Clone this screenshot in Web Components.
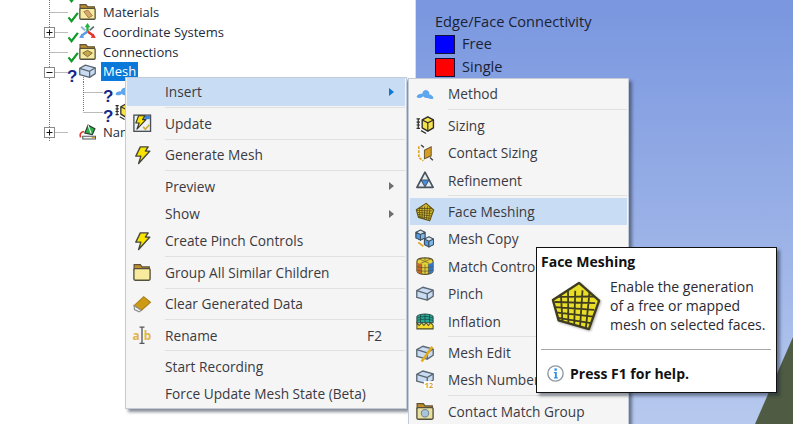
<!DOCTYPE html>
<html>
<head>
<meta charset="utf-8">
<title>Mesh menu</title>
<style>
    html, body { margin: 0; height: 100%; overflow: hidden; background: #fff; }
    body { font-family: "Open Sans", "Noto Sans", sans-serif; font-size: 13px; color: #333; }
</style>
</head>
<body>
<mech-stage>
    <tree-panel slot="tree">
        <tree-row status="check" icon="folderCon" style="margin-top:-20px"></tree-row>
        <tree-row status="check" icon="folderMat">Materials</tree-row>
        <tree-row status="check" icon="coords" expander="plus">Coordinate Systems</tree-row>
        <tree-row status="check" icon="folderCon">Connections</tree-row>
        <tree-row status="ask" icon="meshBox" expander="minus" selected>Mesh</tree-row>
        <tree-row status="ask" icon="method" depth="1"></tree-row>
        <tree-row status="ask" icon="sizing" depth="1" last></tree-row>
        <tree-row status="none" icon="named" expander="plus" clip="22">Named Selections</tree-row>
    </tree-panel>
    <view-port slot="view">
        <legend-key color="#0000ff" title-text="Edge/Face Connectivity">Free</legend-key>
        <legend-key color="#ff0000">Single</legend-key>
    </view-port>

    <pop-menu slot="menus" style="left:125px;top:77px;width:282px;height:332px;--pad:.3px">
        <menu-item arrow active>Insert</menu-item>
        <menu-sep></menu-sep>
        <menu-item icon="update">Update</menu-item>
        <menu-sep></menu-sep>
        <menu-item icon="bolt">Generate Mesh</menu-item>
        <menu-sep></menu-sep>
        <menu-item arrow>Preview</menu-item>
        <menu-item arrow>Show</menu-item>
        <menu-item icon="bolt">Create Pinch Controls</menu-item>
        <menu-sep></menu-sep>
        <menu-item icon="folder">Group All Similar Children</menu-item>
        <menu-sep></menu-sep>
        <menu-item icon="eraser">Clear Generated Data</menu-item>
        <menu-sep></menu-sep>
        <menu-item icon="rename" shortcut="F2">Rename</menu-item>
        <menu-sep></menu-sep>
        <menu-item>Start Recording</menu-item>
        <menu-item>Force Update Mesh State (Beta)</menu-item>
    </pop-menu>

    <pop-menu slot="menus" style="left:408px;top:78px;width:221px;height:360px;--pad:1.3px">
        <menu-item icon="method">Method</menu-item>
        <menu-sep></menu-sep>
        <menu-item icon="sizing">Sizing</menu-item>
        <menu-item icon="contact">Contact Sizing</menu-item>
        <menu-item icon="refine">Refinement</menu-item>
        <menu-sep></menu-sep>
        <menu-item icon="face" active>Face Meshing</menu-item>
        <menu-item icon="meshCopy">Mesh Copy</menu-item>
        <menu-item icon="match">Match Control</menu-item>
        <menu-item icon="meshBox">Pinch</menu-item>
        <menu-item icon="inflate">Inflation</menu-item>
        <menu-sep></menu-sep>
        <menu-item icon="meshEdit">Mesh Edit</menu-item>
        <menu-item icon="meshNum">Mesh Numbering</menu-item>
        <menu-sep></menu-sep>
        <menu-item icon="folderGrp">Contact Match Group</menu-item>
    </pop-menu>

    <help-tip slot="menus" heading="Face Meshing" footer="Press F1 for help." style="left:536px;top:247px">Enable the generation<br>of a free or mapped<br>mesh on selected faces.</help-tip>
</mech-stage>

<script>
    // 16x16 drawings, shared by the tree and the menus
    const box = (x = 0, y = 0) => `
        <g transform="translate(${x} ${y})" stroke="#5a6672" stroke-width="1.200" stroke-linejoin="round">
            <path d="M.7 5 6 2 15.300 4.500 15.300 10 10 13.500 .7 11Z" fill="#c9dcf2"/>
            <path d="M.7 5 10 7.800 15.300 4.500M10 7.800V13.500" fill="none"/>
        </g>`;
    const cube = (x, y) => `
        <g transform="translate(${x} ${y})" stroke="#3f5060" stroke-width=".9" stroke-linejoin="round">
            <path d="M0 2 4 0 8 2V7L4 9 0 7Z" fill="#dbe8f4"/>
            <path d="M0 2 4 4V9L0 7Z" fill="#4f9ae2"/><path d="M8 2 4 4V9L8 7Z" fill="#7fb8ec"/>
        </g>`;
    const folder = (inner, front = '#f8eb9e') => `
        <path d="M1 5V1.500h5.500l1.500 2h6.500V6H1Z" fill="#bd8e2a" stroke="#5f5238" stroke-width="1.100"/>
        <rect x=".8" y="5" width="14.400" height="10.300" rx="1" fill="${front}" stroke="#55503c" stroke-width="1.200"/>${inner}`;
    // face mesh: a bent grid clipped to the five sided outline
    const faceMesh = (fill, line, width) => {
        const [a, b, c, d] = [[0.5, 3.2], [15, 2.6], [13.2, 16], [1.6, 13.6]];
        const mix = (p, q, t) => [p[0] + (q[0] - p[0]) * t, p[1] + (q[1] - p[1]) * t];
        let cells = '';
        for (let i = 1; i < 6; i++) {
            const t = i / 6;
            const p1 = mix(a, b, t), p2 = mix(d, c, t), p3 = mix(a, d, t), p4 = mix(b, c, t);
            cells += `M${p1[0]} ${p1[1]}L${p2[0]} ${p2[1]}M${p3[0]} ${p3[1]}L${p4[0]} ${p4[1]}`;
        }
        const outline = 'M.3 6 9 .3 15.700 6.200 12.300 15.700 2.200 12.800Z';
        return `<clipPath id="fm"><path d="${outline}"/></clipPath>
            <path d="${outline}" fill="${fill}" stroke="${line}" stroke-width="${width * 1.300}" stroke-linejoin="round"/>
            <path d="${cells}" clip-path="url(#fm)" fill="none" stroke="${line}" stroke-width="${width}"/>`;
    };
    const ICONS = {
        check: `<path d="M2 8.500 6 13.500 14.500 2.500" fill="none" stroke="#109a28" stroke-width="3"/>`,
        folder: folder(''),
        folderMat: folder(`<path d="M4.500 8 8.500 6.800 12.500 12 9 14Z" fill="#dba66c" stroke="#a07d4c" stroke-width=".9"/>`),
        folderCon: folder(`<path d="M3.500 9.500 8 7 12.500 9.500 8 13Z" fill="#c9a84a" stroke="#76683c" stroke-width=".9"/>`),
        folderGrp: folder(`<circle cx="8" cy="10" r="3.300" fill="#a9c3d8" stroke="#6f8496" stroke-width=".9"/>`, '#e8e0a0'),
        coords: `<path d="M8 8V3" stroke="#28b040" stroke-width="2.200"/><path d="M8 0 5.300 4h5.400Z" fill="#28b040"/>
            <path d="M8 8 13 11.500" stroke="#e0342a" stroke-width="2.200"/><path d="M15.800 14 11 13.800 13.600 9.800Z" fill="#e0342a"/>
            <path d="M8 8 3 11.500" stroke="#5a9ae4" stroke-width="2.200"/><path d="M.2 14 5 13.800 2.400 9.800Z" fill="#5a9ae4"/>
            <path d="M2 3.500 6 7" stroke="#8fb4dc" stroke-width="1.800"/><path d="M14 3.500 10 7" stroke="#5a6a78" stroke-width="1.500"/>`,
        meshBox: box(),
        method: `<path d="M.5 10.500C1 8.500 4 7.500 5.500 8 6 5 8.500 3.500 10.500 5 12 6 12 7.500 11.800 8.500 13.500 8.500 15.500 10 15.500 12 14 13 12 12.500 10.500 11.500 9 12 7 11 6.500 10 5 11.500 2 12.500.5 10.500Z" fill="#5ea6ee"/>`,
        named: `<path d="M5.500 9.500 8.500 2 15 5.500 12.500 11Z" fill="#2bb24a" stroke="#2c3a30" stroke-width="1.100"/><path d="M8.500 2 11.500 10" stroke="#fff"/>
            <path d="M3.500 12.500h12v2.500h-12Z" fill="#f2f2f2" stroke="#55585c"/><path d="M12 13.700h3" stroke="#d9a02a"/>
            <path d="M1.500 13.500C.3 10.500 1.500 8.500 5 8" fill="none" stroke="#dc342a" stroke-width="1.500"/>`,
        bolt: `<path d="M6.500 .8H13.500L11 4.500H15L5 15.500 7 9H2.500Z" fill="#f8e400" stroke="#45453a" stroke-width="1.200" stroke-linejoin="round"/>`,
        update: `<rect x=".8" y="1" width="14.800" height="14.400" fill="#eef2f6" stroke="#4c5056" stroke-width="1.200"/><rect x="10" y="1.600" width="5" height="3" fill="#3a86d8"/>
            <path d="M5 1.500H10.500L8.500 5H11.500L3.500 13.500 5.500 8H2.500Z" fill="#f8e400" stroke="#35352c" stroke-width="1" stroke-linejoin="round"/>
            <path d="M9 11.500 11 13.500 14.500 9.500" fill="none" stroke="#cfa93c" stroke-width="1.500"/>`,
        eraser: `<path d="M1 9.500 9.500 1.500 15.500 6.500 7.500 13.500Z" fill="#cd9a14" stroke="#a97f18"/><path d="M1 9.500 7.500 13.500 5.500 15 1.300 13Z" fill="#f4f4f4" stroke="#8c8c8c"/>`,
        rename: `<path d="M5.800 1h4.400M5.800 15.500h4.400M8 1v14.500" fill="none" stroke="#55585c" stroke-width="1.200"/>
            <text x="-.5" y="12" font-size="10.500" font-weight="700" fill="#e2b448" font-family="Open Sans, sans-serif">a</text>
            <text x="9.500" y="12" font-size="10.500" font-weight="700" fill="#e2b448" font-family="Open Sans, sans-serif">b</text>`,
        sizing: `<path d="M5.500 3.500 10.500 .7 15.500 3.500V10.500L10.500 13.500 5.500 10.500Z" fill="#f6e24a" stroke="#2c2c28" stroke-width="1.200" stroke-linejoin="round"/>
            <path d="M5.500 3.500 10.500 6 15.500 3.500M10.500 6V13.500" fill="none" stroke="#2c2c28"/>
            <path d="M2 2.500v8.500M.5 2.500h3M.5 5.500h3M.5 8h3M.5 11h3M4.500 13 9 15.500" fill="none" stroke="#2c2c28" stroke-width="1.100"/>`,
        contact: `<path d="M7.500 5.500 13.500 2.500V10.500L7.500 13Z" fill="#d69c24" stroke="#6d5a2c" stroke-width=".9"/><path d="M2.500 2V12L6.500 15" fill="none" stroke="#dca92c" stroke-width="1.500" stroke-dasharray="2.500 1"/>
            <path d="M4.500 .8 7 3M12.500 12 15 14.500" stroke="#444" stroke-width="1.200"/>`,
        refine: `<path d="M8 1 15.200 14.500H.8Z" fill="#e6ebf0" stroke="#47525e" stroke-width="1.500" stroke-linejoin="round"/>
            <path d="M8 14 4.500 8h7Z" fill="#3f90e4" stroke="#47525e" stroke-width=".9"/>`,
        face: faceMesh('#dcc22e', '#5e5018', .75),
        faceLarge: faceMesh('#e8de28', '#3f3c20', .6),
        meshCopy: `${cube(0, 0)}${cube(7.500, 6)}<path d="M2 11 6.500 14.500" stroke="#e0a828" stroke-width="1.600"/>`,
        match: `<path d="M.8 4C.8 2 4 .8 8 .8S15.200 2 15.200 4V12.500C15.200 14 12 15.500 8 15.500S.8 14 .8 12.500Z" fill="#e6d23c" stroke="#5c5228"/>
            <path d="M.8 4.500C1.500 5.500 3 6 5 6.400V15C3 14.500.8 13.800.8 12.500Z" fill="#c7682a"/>
            <path d="M11 6.400C13 6 14.500 5.500 15.200 4.500V12.500C15.200 13.800 13 14.500 11 15Z" fill="#2f78d0"/>
            <path d="M.8 8.500C5 10 11 10 15.200 8.500M.8 11.500C5 13 11 13 15.200 11.500M5 6.400V15M8 6.700V15.500M11 6.400V15M3 1.800 12 5.800M8 .8V3M13 1.800 4 5.800" fill="none" stroke="#5c5228" stroke-width=".6"/>`,
        inflate: `<path d="M.8 4C3 1 13 1 15.200 4V9.500H.8Z" fill="#2ba894" stroke="#2f4f4a" stroke-width=".9"/><path d="M.8 5.500C5 3.500 11 3.500 15.200 5.500M.8 7.500C5 6 11 6 15.200 7.500M4 2.500v7M8 2v7.500M12 2.500v7" fill="none" stroke="#143f3a" stroke-width=".6"/>
            <path d="M.8 9.500 2.800 12 5 9.500 7 12 9 9.500 11 12 13 9.500 15.200 12V15H.8Z" fill="#f2dc30" stroke="#4c4a20" stroke-width=".9"/>`,
        meshEdit: `${box()}<path d="M5 15.500 14.500 2.500" stroke="#e4ac1c" stroke-width="2.200"/>`,
        meshNum: `<g transform="translate(0 -2)">${box()}</g><rect x="7" y="9" width="9" height="7" fill="#fff"/>
            <text x="7.800" y="15.500" font-size="6.500" font-weight="700" fill="#d9a02a" font-family="Open Sans, sans-serif">12</text>`,
        info: `<circle cx="8" cy="8" r="7.200" fill="#fff" stroke="#8f9aa3" stroke-width="1.300"/>
            <rect x="7" y="3.200" width="2.200" height="2.200" fill="#2f8fe8"/><path d="M6.500 6.500h2.700v5h1v1.200H6.500v-1.200h1V7.700h-1Z" fill="#2f8fe8"/>`
    };

    class AppIcon extends HTMLElement {
        connectedCallback() {
            const size = this.getAttribute('size') || 16;
            this.attachShadow({ mode: 'open' }).innerHTML = `
                <style>
                    :host { display: inline-flex; width: ${size}px; height: ${size}px; flex: none; }
                    svg { width: 100%; height: 100%; overflow: visible; }
                </style>
                <svg viewBox="0 0 16 16">${ICONS[this.getAttribute('name')] || ''}</svg>`;
        }
    }
    customElements.define('app-icon', AppIcon);

    class MechStage extends HTMLElement {
        constructor() {
            super();
            this.attachShadow({ mode: 'open' }).innerHTML = `
                <style>
                    :host { display: grid; grid-template-columns: 416px 1fr; width: 793px; height: 424px; position: relative; overflow: hidden; }
                </style>
                <slot name="tree"></slot>
                <slot name="view"></slot>
                <slot name="menus"></slot>`;
        }
    }
    customElements.define('mech-stage', MechStage);

    class TreePanel extends HTMLElement {
        constructor() {
            super();
            this.attachShadow({ mode: 'open' }).innerHTML = `
                <style>
                    :host { display: flex; flex-direction: column; padding-top: 2px; background: #fff; border-right: 1px solid #dcdcdc; box-sizing: border-box; height: 424px; color: #1c2a3a; font-size: 13px; }
                </style>
                <slot></slot>`;
        }
    }
    customElements.define('tree-panel', TreePanel);

    class TreeRow extends HTMLElement {
        connectedCallback() {
            const depth = +this.getAttribute('depth') || 0;
            const status = this.getAttribute('status');
            const exp = this.getAttribute('expander');
            const selected = this.hasAttribute('selected');
            const clip = this.getAttribute('clip');
            const dot = 'stroke="#777" stroke-dasharray="1 1"';
            // connector lines for this row, drawn behind the expander
            let lines = '';
            if (depth === 0) {
                lines = `<path d="M49.500 0V20M49.500 10.500H68" fill="none" ${dot}/>`;
                if (exp === 'minus') lines += `<path d="M83.500 15V20" fill="none" ${dot}/>`;
            } else {
                lines = `<path d="M49.500 0V20M83.500 0V${this.hasAttribute('last') ? 10 : 20}M83.500 10.500H103" fill="none" ${dot}/>`;
            }
            if (exp) {
                lines += `<rect x="44.500" y="5.500" width="10" height="10" fill="#fff" stroke="#8a8a8a"/><path d="M46.500 10.500h6" stroke="#111"/>`;
                if (exp === 'plus') lines += `<path d="M49.500 7.500v6" stroke="#111"/>`;
            }
            const lead = depth ? 103 : 67;
            const mark = status === 'check'
                ? '<app-icon name="check" size="12" style="margin:9px -1px 0 0"></app-icon>'
                : status === 'ask' ? '<span class="ask">?</span>' : '<span class="st-none"></span>';
            this.attachShadow({ mode: 'open' }).innerHTML = `
                <style>
                    :host { display: flex; height: 20px; position: relative; align-items: center; white-space: nowrap; }
                    svg.lines { position: absolute; left: 0; top: 0; width: 300px; height: 20px; }
                    .row { display: flex; align-items: center; margin-left: ${lead}px; position: relative; }
                    .ask { width: 11px; color: #14298c; font: 700 17px/13px "Liberation Sans", sans-serif; margin-top: 8px; }
                    .st-none { width: 11px; }
                    app-icon.ic { margin: -1px 5px 0 1px; }
                    .label { padding: 0 2px 0 2px; line-height: 15px; ${clip ? `max-width: ${clip}px; overflow: hidden;` : ''} }
                    .label.sel { line-height: 19px; background: #0a78d8; color: #fff; outline: 1px dotted #a8541a; outline-offset: -1px; margin-top: -1px; }
                </style>
                <svg class="lines">${lines}</svg>
                <div class="row">
                    ${mark}
                    <app-icon class="ic" name="${this.getAttribute('icon')}" size="17"></app-icon>
                    <span class="label ${selected ? 'sel' : ''}"><slot></slot></span>
                </div>`;
        }
    }
    customElements.define('tree-row', TreeRow);

    class ViewPort extends HTMLElement {
        constructor() {
            super();
            this.attachShadow({ mode: 'open' }).innerHTML = `
                <style>
                    :host { display: flex; flex-direction: column; gap: 4px; position: relative; padding: 12px 0 0 19px; background: linear-gradient(#7996df, #b7c9ee); color: #1a2233; box-sizing: border-box; height: 424px; font-size: 14.600px; }
                    svg { position: absolute; right: 0; bottom: 0; width: 60px; height: 100px; }
                </style>
                <slot></slot>
                <svg viewBox="0 0 60 100"><path d="M60 13 22 100H60Z" fill="#4f5b42"/></svg>`;
        }
    }
    customElements.define('view-port', ViewPort);

    class LegendKey extends HTMLElement {
        connectedCallback() {
            const heading = this.getAttribute('title-text');
            this.attachShadow({ mode: 'open' }).innerHTML = `
                <style>
                    :host { display: block; }
                    .title { line-height: 18px; margin-bottom: 5px; }
                    .key { display: flex; align-items: center; gap: 7px; line-height: 19px; }
                    .name { padding-bottom: 2px; height: 17px; line-height: 17px; }
                    .swatch { width: 18px; height: 17px; background: ${this.getAttribute('color')}; border: 1px solid #10103a; }
                </style>
                ${heading ? `<div class="title">${heading}</div>` : ''}
                <div class="key"><span class="swatch"></span><span class="name"><slot></slot></span></div>`;
        }
    }
    customElements.define('legend-key', LegendKey);

    class PopMenu extends HTMLElement {
        constructor() {
            super();
            this.attachShadow({ mode: 'open' }).innerHTML = `
                <style>
                    :host { display: flex; flex-direction: column; position: absolute; box-sizing: border-box; padding: var(--pad, 0) 1px 0; background: #f5f5f5; border: 1px solid #c3cbd8; box-shadow: 3px 3px 3px rgba(40, 50, 70, .55); color: #3a3a42; font-size: 13.700px; }
                </style>
                <slot></slot>`;
        }
    }
    customElements.define('pop-menu', PopMenu);

    class MenuItem extends HTMLElement {
        connectedCallback() {
            const icon = this.getAttribute('icon');
            const shortcut = this.getAttribute('shortcut');
            const hasArrow = this.hasAttribute('arrow');
            const active = this.hasAttribute('active');
            this.attachShadow({ mode: 'open' }).innerHTML = `
                <style>
                    :host { display: flex; align-items: center; height: 27.400px; flex: none; white-space: nowrap; background: ${active ? '#c8ddf4' : 'transparent'}; }
                    .ic { width: 38px; flex: none; display: flex; justify-content: center; padding-right: 8px; box-sizing: border-box; }
                    .label { flex: 1; line-height: 19px; }
                    .key { margin-right: 23px; }
                    .arrow { width: 0; height: 0; margin-right: 11px; border: 4.500px solid transparent; border-left: 5px solid ${active ? '#0a78d0' : '#6e6e6e'}; border-right: 0; }
                </style>
                <span class="ic">${icon ? `<app-icon name="${icon}" size="18"></app-icon>` : ''}</span>
                <span class="label"><slot></slot></span>
                ${shortcut ? `<span class="key">${shortcut}</span>` : ''}
                ${hasArrow ? '<span class="arrow"></span>' : ''}`;
        }
    }
    customElements.define('menu-item', MenuItem);

    class MenuSep extends HTMLElement {
        constructor() {
            super();
            this.attachShadow({ mode: 'open' }).innerHTML = `
                <style>
                    :host { display: block; flex: none; height: 4px; padding: 1.500px 0 0 38px; box-sizing: border-box; }
                    div { height: 1px; background: #e0e0e0; }
                </style>
                <div></div>`;
        }
    }
    customElements.define('menu-sep', MenuSep);

    class HelpTip extends HTMLElement {
        connectedCallback() {
            this.attachShadow({ mode: 'open' }).innerHTML = `
                <style>
                    :host { display: flex; flex-direction: column; position: absolute; box-sizing: border-box; width: 241px; height: 146px; background: #fff; border: 1px solid #111; box-shadow: 3px 3px 3px rgba(30, 40, 60, .5); padding: 5px 5px 0 4px; color: #2a2a30; font-size: 14px; }
                    h4 { margin: 0; font-size: 14px; font-weight: 700; line-height: 18px; color: #111; }
                    .body { display: flex; margin-top: 6px; height: 64px; }
                    .pic { margin: 5px 10px 0 11px; filter: drop-shadow(1px 1px 1px rgba(0, 0, 0, .3)); }
                    .text { line-height: 19px; }
                    hr { margin: 8px 0 0; border: 0; height: 1px; background: #a8a8a8; }
                    .foot { display: flex; align-items: center; gap: 6px; margin: 14px 0 0 6px; font-weight: 700; color: #111; line-height: 19px; }
                </style>
                <h4>${this.getAttribute('heading')}</h4>
                <div class="body">
                    <app-icon class="pic" name="faceLarge" size="48"></app-icon>
                    <div class="text"><slot></slot></div>
                </div>
                <hr>
                <div class="foot"><app-icon name="info" size="17"></app-icon><span>${this.getAttribute('footer')}</span></div>`;
        }
    }
    customElements.define('help-tip', HelpTip);
</script>
</body>
</html>
